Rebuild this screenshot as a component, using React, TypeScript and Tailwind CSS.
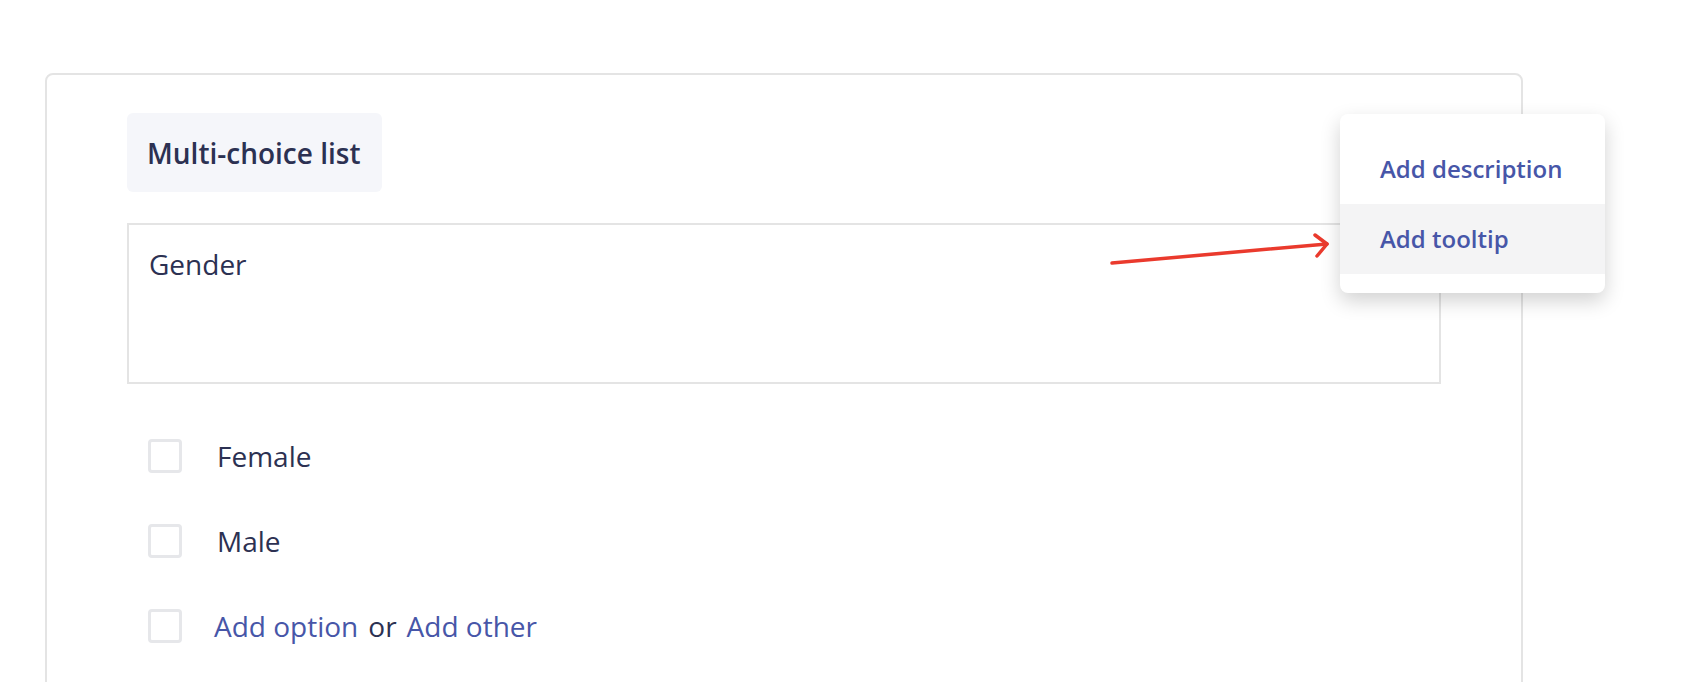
import React from 'react';

const options = ['Female', 'Male'];

const Checkbox = () => (
    <div className="w-[34px] h-[34px] shrink-0 rounded-[4px] border-[3px] border-[#e6e7ea] bg-white"/>
);

const App = () => {
    return (
        <div className="relative w-[1692px] h-[682px] overflow-hidden bg-white font-['Open_Sans',sans-serif] text-[#2c3152]">
            <div className="ml-[45px] mt-[73px] w-[1478px] h-[700px] rounded-[8px] border-2 border-[#e4e4e4] px-[80px] pt-[38px]">
                <div className="inline-flex h-[79px] items-center rounded-[6px] bg-[#f5f6fa] pl-[20px] pr-[21px]">
                    <span className="text-[28px] font-semibold leading-none">Multi-choice list</span>
                </div>

                <div className="mt-[31px] h-[161px] border-2 border-[#e4e4e4] px-[20px] pt-[19px]">
                    <p className="text-[28px] leading-[40px]">Gender</p>
                </div>

                <div className="mt-[52px] flex flex-col gap-[45px] pl-[21px]">
                    {options.map((o) => (
                        <div key={o} className="flex h-[40px] items-center gap-[35px]">
                            <Checkbox/>
                            <span className="text-[28px] leading-[40px]">{o}</span>
                        </div>
                    ))}
                    <div className="flex h-[40px] items-center gap-[32px]">
                        <Checkbox/>
                        <span className="text-[28px] leading-[40px]">
                            <span className="text-[#4756a8]">Add option</span>
                            <span className="mx-[10px]">or</span>
                            <span className="text-[#4756a8]">Add other</span>
                        </span>
                    </div>
                </div>
            </div>

            {/* arrow pointing at the menu */}
            <svg className="absolute left-[1100px] top-[225px]" width="240" height="50" viewBox="0 0 240 50" fill="none">
                <path d="M12 38 L227 19" stroke="#ea3a2d" strokeWidth="3.5" strokeLinecap="round"/>
                <path d="M215 10 L227 19 L217 31" stroke="#ea3a2d" strokeWidth="3.5" strokeLinecap="round" strokeLinejoin="round"/>
            </svg>

            <div className="absolute left-[1340px] top-[114px] w-[265px] rounded-[8px] bg-white pt-[20px] pb-[19px] shadow-[0_8px_20px_rgba(0,0,0,0.18)]">
                <div className="flex h-[70px] items-center px-[40px] text-[24px] font-semibold text-[#4756a8]">Add description</div>
                <div className="flex h-[70px] items-center bg-[#f4f4f5] px-[40px] text-[24px] font-semibold text-[#4756a8]">Add tooltip</div>
            </div>
        </div>
    );
};

export default App;
